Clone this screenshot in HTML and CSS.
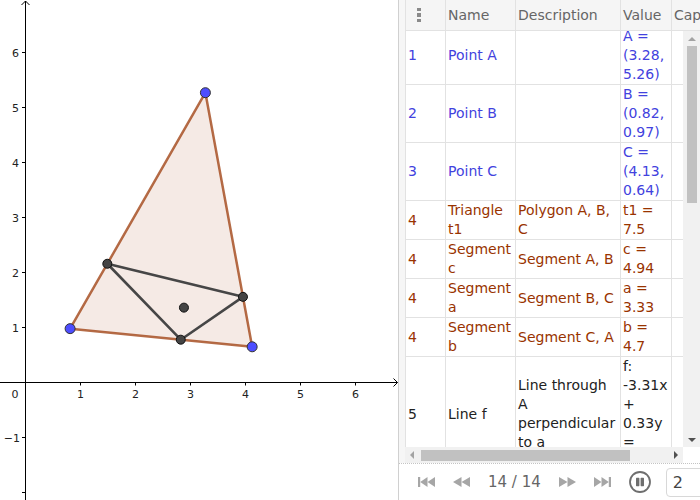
FILE: index.html
```html
<!DOCTYPE html>
<html>
<head>
<meta charset="utf-8">
<link rel="stylesheet" href="styles.css">
</head>
<body>
<div class="app">
  <div class="graphics">
    <svg width="398" height="500" viewBox="0 0 398 500">
      <g class="axes">
        <line x1="0" y1="382.5" x2="397.5" y2="382.5"/>
        <polyline points="393.5,378.5 397.5,382.5 393.5,386.5"/>
        <line x1="25.5" y1="1" x2="25.5" y2="500"/>
        <polyline points="21.5,5 25.5,1 29.5,5"/>
        <line x1="80.5" y1="382.5" x2="80.5" y2="385.5"/>
        <line x1="135.5" y1="382.5" x2="135.5" y2="385.5"/>
        <line x1="190.5" y1="382.5" x2="190.5" y2="385.5"/>
        <line x1="245.5" y1="382.5" x2="245.5" y2="385.5"/>
        <line x1="300.5" y1="382.5" x2="300.5" y2="385.5"/>
        <line x1="355.5" y1="382.5" x2="355.5" y2="385.5"/>
        <line x1="22" y1="52.5" x2="25.5" y2="52.5"/>
        <line x1="22" y1="107.5" x2="25.5" y2="107.5"/>
        <line x1="22" y1="162.5" x2="25.5" y2="162.5"/>
        <line x1="22" y1="217.5" x2="25.5" y2="217.5"/>
        <line x1="22" y1="272.5" x2="25.5" y2="272.5"/>
        <line x1="22" y1="327.5" x2="25.5" y2="327.5"/>
        <line x1="22" y1="437.5" x2="25.5" y2="437.5"/>
        <line x1="22" y1="492.5" x2="25.5" y2="492.5"/>
      </g>
      <g class="labels">
        <text x="15" y="398" text-anchor="middle">0</text>
        <text x="80.5" y="398" text-anchor="middle">1</text>
        <text x="135.5" y="398" text-anchor="middle">2</text>
        <text x="190.5" y="398" text-anchor="middle">3</text>
        <text x="245.5" y="398" text-anchor="middle">4</text>
        <text x="300.5" y="398" text-anchor="middle">5</text>
        <text x="355.5" y="398" text-anchor="middle">6</text>
        <text x="19" y="57" text-anchor="end">6</text>
        <text x="19" y="112" text-anchor="end">5</text>
        <text x="19" y="167" text-anchor="end">4</text>
        <text x="19" y="222" text-anchor="end">3</text>
        <text x="19" y="277" text-anchor="end">2</text>
        <text x="19" y="332" text-anchor="end">1</text>
        <text x="20" y="442" text-anchor="end">−1</text>
      </g>
      <polygon class="poly-fill" points="205.4,92.7 70.1,328.65 252.15,346.8"/>
      <polygon class="poly-edge" points="205.4,92.7 70.1,328.65 252.15,346.8"/>
      <polygon class="orthic" points="107.3,263.75 242.97,296.86 180.76,339.7"/>
      <circle class="pt-dark" cx="107.3" cy="263.75" r="4.5"/>
      <circle class="pt-dark" cx="242.97" cy="296.86" r="4.5"/>
      <circle class="pt-dark" cx="180.76" cy="339.7" r="4.5"/>
      <circle class="pt-dark" cx="183.95" cy="307.64" r="4.5"/>
      <circle class="pt-blue" cx="205.4" cy="92.7" r="5"/>
      <circle class="pt-blue" cx="70.1" cy="328.65" r="5"/>
      <circle class="pt-blue" cx="252.15" cy="346.8" r="5"/>
    </svg>
  </div>

  <div class="panel">
    <div class="table-area">
      <div class="thead">
        <div class="hcell"><span class="dots"><i></i><i></i><i></i></span></div>
        <div class="hcell">Name</div>
        <div class="hcell">Description</div>
        <div class="hcell">Value</div>
        <div class="hcell">Caption</div>
      </div>
      <div class="tbody-area">
        <div class="viewport">
          <div class="rows">
            <div class="row blue">
              <div class="cell">1</div>
              <div class="cell">Point A</div>
              <div class="cell"></div>
              <div class="cell">A =<br>(3.28,<br>5.26)</div>
              <div class="cell"></div>
            </div>
            <div class="row blue">
              <div class="cell">2</div>
              <div class="cell">Point B</div>
              <div class="cell"></div>
              <div class="cell">B =<br>(0.82,<br>0.97)</div>
              <div class="cell"></div>
            </div>
            <div class="row blue">
              <div class="cell">3</div>
              <div class="cell">Point C</div>
              <div class="cell"></div>
              <div class="cell">C =<br>(4.13,<br>0.64)</div>
              <div class="cell"></div>
            </div>
            <div class="row brown">
              <div class="cell">4</div>
              <div class="cell">Triangle<br>t1</div>
              <div class="cell">Polygon A, B,<br>C</div>
              <div class="cell">t1 =<br>7.5</div>
              <div class="cell"></div>
            </div>
            <div class="row brown">
              <div class="cell">4</div>
              <div class="cell">Segment<br>c</div>
              <div class="cell">Segment A, B</div>
              <div class="cell">c =<br>4.94</div>
              <div class="cell"></div>
            </div>
            <div class="row brown">
              <div class="cell">4</div>
              <div class="cell">Segment<br>a</div>
              <div class="cell">Segment B, C</div>
              <div class="cell">a =<br>3.33</div>
              <div class="cell"></div>
            </div>
            <div class="row brown">
              <div class="cell">4</div>
              <div class="cell">Segment<br>b</div>
              <div class="cell">Segment C, A</div>
              <div class="cell">b =<br>4.7</div>
              <div class="cell"></div>
            </div>
            <div class="row black">
              <div class="cell">5</div>
              <div class="cell">Line f</div>
              <div class="cell">Line through<br>A<br>perpendicular<br>to a</div>
              <div class="cell">f:<br>-3.31x<br>+<br>0.33y<br>=<br>-9.12</div>
              <div class="cell"></div>
            </div>
          </div>
        </div>
        <div class="vscroll">
          <div class="arrow-box"><span class="tri-up"></span></div>
          <div class="vthumb"></div>
          <div class="spacer"></div>
          <div class="arrow-box"><span class="tri-down"></span></div>
        </div>
      </div>
      <div class="hscroll-row">
        <div class="hscroll">
          <div class="harrow"><span class="tri-left"></span></div>
          <div class="hthumb"></div>
          <div class="spacer"></div>
          <div class="harrow"><span class="tri-right"></span></div>
        </div>
        <div class="corner"></div>
      </div>
    </div>

    <div class="nav">
      <svg class="nicon" width="17" height="10" viewBox="0 0 17 10"><rect x="0" y="0" width="2.2" height="10"/><polygon points="9.5,0 2.2,5 9.5,10"/><polygon points="17,0 9.5,5 17,10"/></svg>
      <svg class="nicon" width="17" height="10" viewBox="0 0 17 10"><polygon points="8.5,0 0,5 8.5,10"/><polygon points="17,0 8.5,5 17,10"/></svg>
      <span class="counter">14 / 14</span>
      <svg class="nicon" width="17" height="10" viewBox="0 0 17 10"><polygon points="0,0 8.5,5 0,10"/><polygon points="8.5,0 17,5 8.5,10"/></svg>
      <svg class="nicon" width="17" height="10" viewBox="0 0 17 10"><polygon points="0,0 7.5,5 0,10"/><polygon points="7.5,0 14.8,5 7.5,10"/><rect x="14.8" y="0" width="2.2" height="10"/></svg>
      <svg class="pause" width="22" height="22" viewBox="0 0 22 22"><circle cx="11" cy="11" r="10" /><rect x="7" y="6.8" width="3.4" height="8.4" rx="0.6"/><rect x="11.6" y="6.8" width="3.4" height="8.4" rx="0.6"/></svg>
      <div class="speed">2</div>
    </div>
  </div>
</div>
</body>
</html>
```

FILE: styles.css
```css
* { box-sizing: border-box; }
html, body { margin: 0; padding: 0; }
body {
  width: 700px;
  height: 500px;
  overflow: hidden;
  background: #fff;
  font-family: "DejaVu Sans", sans-serif;
}
.app { display: flex; width: 700px; height: 500px; }

/* graphics view */
.graphics { width: 398px; flex: none; height: 500px; overflow: hidden; }
.graphics svg { display: block; }
.axes line, .axes polyline { stroke: #000; stroke-width: 1; fill: none; }
.labels text { font-family: "DejaVu Sans", sans-serif; font-size: 11px; fill: #222; }
.poly-fill { fill: rgba(153, 51, 0, 0.1); stroke: none; }
.poly-edge { fill: none; stroke: rgba(153, 51, 0, 0.72); stroke-width: 2.5; stroke-linejoin: round; }
.orthic { fill: none; stroke: #464646; stroke-width: 2.6; stroke-linejoin: round; }
.pt-dark { fill: #444; stroke: #111; stroke-width: 1; }
.pt-blue { fill: #4d4dff; stroke: #333; stroke-width: 1; }

/* right panel */
.panel {
  flex: 1;
  min-width: 0;
  display: flex;
  flex-direction: column;
  border-left: 1px solid #d0d0d0;
  overflow: hidden;
}
.table-area {
  flex: none;
  height: 463px;
  display: flex;
  flex-direction: column;
  padding-left: 6px;
  background: #f6f6f6;
}
.thead {
  display: grid;
  grid-template-columns: 40px 70px 105px 51px 80px;
  height: 31px;
  flex: none;
  border-left: 1px solid #e2e2e2;
  border-bottom: 1px solid #e2e2e2;
  background: #f5f5f5;
  overflow: hidden;
}
.hcell {
  border-right: 1px solid #e2e2e2;
  display: flex;
  align-items: center;
  padding-left: 2px;
  font-size: 14px;
  color: #666;
  white-space: nowrap;
}
.dots { display: flex; flex-direction: column; gap: 2px; margin-left: 9px; }
.dots i { display: block; width: 4px; height: 3.5px; background: #8a8a8a; }

.tbody-area { display: flex; flex: none; height: 416px; }
.viewport {
  flex: 1;
  min-width: 0;
  overflow: hidden;
  border-left: 1px solid #e2e2e2;
  background: #fff;
}
.rows { margin-top: -4px; }
.row {
  display: grid;
  grid-template-columns: 40px 70px 105px 51px 80px;
  border-bottom: 1px solid #e2e2e2;
}
.cell {
  border-right: 1px solid #e2e2e2;
  padding-left: 2px;
  font-size: 14px;
  line-height: 19px;
  min-height: 19px;
  display: flex;
  align-items: center;
  white-space: nowrap;
}
.row.blue .cell { color: #4242de; }
.row.brown .cell { color: #993300; }
.row.black .cell { color: #222; }

.vscroll {
  width: 17px;
  flex: none;
  background: #f1f1f1;
  display: flex;
  flex-direction: column;
  align-items: center;
}
.arrow-box { height: 15px; width: 17px; display: flex; align-items: center; justify-content: center; flex: none; }
.vthumb { width: 10px; height: 157px; background: #c1c1c1; flex: none; }
.spacer { flex: 1; }
.tri-up { width: 0; height: 0; border-left: 4px solid transparent; border-right: 4px solid transparent; border-bottom: 4px solid #a3a3a3; }
.tri-down { width: 0; height: 0; border-left: 4px solid transparent; border-right: 4px solid transparent; border-top: 4px solid #505050; }

.hscroll-row { display: flex; height: 16px; flex: none; }
.hscroll {
  flex: 1;
  background: #f1f1f1;
  display: flex;
  align-items: center;
}
.harrow { width: 14px; height: 16px; display: flex; align-items: center; justify-content: center; flex: none; }
.hscroll .harrow:last-child { width: 15px; }
.hthumb { width: 209px; height: 11px; background: #c1c1c1; margin-left: 2px; flex: none; }
.tri-left { width: 0; height: 0; border-top: 4px solid transparent; border-bottom: 4px solid transparent; border-right: 4px solid #a3a3a3; }
.tri-right { width: 0; height: 0; border-top: 4px solid transparent; border-bottom: 4px solid transparent; border-left: 4px solid #505050; }
.corner { width: 17px; flex: none; background: #fff; }

/* navigation bar */
.nav {
  flex: 1;
  display: flex;
  align-items: center;
  gap: 18px;
  padding-left: 19px;
  border-top: 1px dotted #c4c4c4;
  background: #fff;
}
.nicon { flex: none; fill: #a6a6a6; }
.counter { font-size: 15px; color: #666; white-space: nowrap; }
.pause { flex: none; }
.pause circle { fill: none; stroke: #6e6e6e; stroke-width: 1.8; }
.pause rect { fill: #6e6e6e; }
.speed {
  flex: none;
  width: 60px;
  height: 29px;
  margin-left: -3px;
  border: 1px solid #d8d8d8;
  border-radius: 4px;
  font-size: 16px;
  color: #444;
  padding-left: 6px;
  display: flex;
  align-items: center;
}
```
